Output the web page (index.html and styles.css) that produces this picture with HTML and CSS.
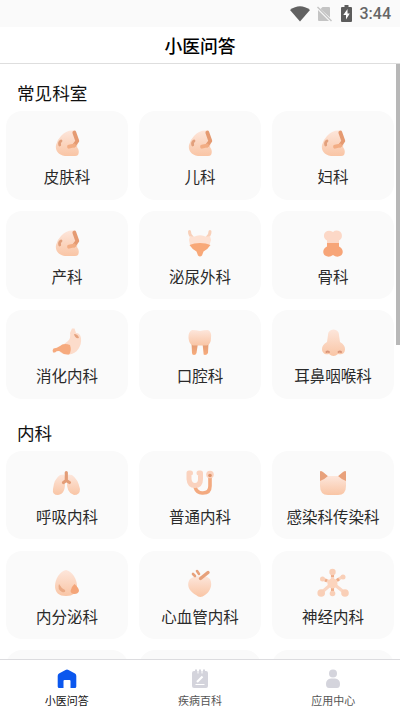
FILE: index.html
```
<!DOCTYPE html>
<html lang="zh-CN">
<head>
<meta charset="utf-8">
<title>小医问答</title>
<link rel="stylesheet" href="styles.css">
</head>
<body>
<svg class="defs" aria-hidden="true">
  <defs>
    <linearGradient id="pale" x1="0" y1="0" x2="0" y2="1"><stop offset="0" stop-color="#fde6db"/><stop offset="1" stop-color="#f9c5a5"/></linearGradient>
    <linearGradient id="warm" x1="0" y1="0" x2="0" y2="1"><stop offset="0" stop-color="#e09b76"/><stop offset="1" stop-color="#f8ac7c"/></linearGradient>
    <symbol id="skin" viewBox="0 0 30 30">
      <path fill="url(#pale)" d="M9 8C12 4 17 2 22 2.500L26 12L25 19Q28 23 26 27Q25 28 23 28H13C6 27 3 22 4 17Q5 12 9 8Z"/>
      <path fill="none" stroke="#e59a71" stroke-width="3.8" stroke-linecap="round" stroke-linejoin="round" d="M22.300 4.500L25.300 13L22 17.500"/>
      <path fill="none" stroke="#f2ad84" stroke-width="3.800" stroke-linecap="round" d="M22 17.500L17 18.700"/>
      <path fill="none" stroke="#e2a07c" stroke-width="2.800" stroke-linecap="round" d="M9 13Q7 14 7.700 17"/>
    </symbol>
    <symbol id="uterus" viewBox="0 0 30 30">
      <path fill="none" stroke="#f8d0b9" stroke-width="3" stroke-linecap="round" d="M4.500 3.500Q4.500 7 7 9M25 3.500Q25 7 22.500 9"/>
      <path fill="#fde0d1" d="M5 8Q9 9 11 8Q15 6.500 19 8Q21 9 25 8L26 12Q25 17 23 19H7Q4 16 4 12Z"/>
      <path fill="#f8a878" d="M4.500 17Q9 15 15 15T25.500 17Q23 21 18.500 23.500L17 27.500Q15 29.500 13 27.500L11.500 23.500Q7 21 4.500 17Z"/>
    </symbol>
    <symbol id="bone" viewBox="0 0 30 30">
      <path fill="#fcd8c7" d="M9 15.500V12.500C5.500 11 5 6 7.500 4S12.500 2.500 15 4Q18 1.500 22 3.500C25 6 24.500 11 21 12.500V15.500Z"/>
      <path fill="#f7a578" d="M9 15H21V18.500C25 20 26 25 23 27.500Q19 30 15 27Q11 30 7 27.500C4 25 5 20 9 18.500Z"/>
    </symbol>
    <symbol id="stomach" viewBox="0 0 30 30">
      <path fill="#fcdccb" d="M20 1.500H22.500L24 6Q28 6 29 11C30 19 25 27 17 27.500Q11 28 8 25L9 18Q13 17 16 14Q19 11 18 6Z"/>
      <path fill="#f6aa7e" d="M1.500 21.500Q5 21 8 19Q12 15.500 18 18Q20 24 17 27.500Q12 28 9 25Q6 23 3 25.500H1Q0 23 1.500 21.500Z"/>
      <path fill="#e5a37f" d="M22 7Q26 7 27 11Q23 12 22 7Z"/>
    </symbol>
    <symbol id="tooth" viewBox="0 0 30 30">
      <path fill="url(#warm)" d="M6.500 16H13L11.500 26Q11 28 9 28T7 26ZM17.500 16H23.500L23 26Q22 28 20 28T18.500 26Z"/>
      <path fill="url(#pale)" d="M7 3Q11 3 15 4Q19 3 23 3Q27 5 26 11Q26 17 22 18.500H8Q4 17 3.500 11Q3 5 7 3Z"/>
    </symbol>
    <symbol id="nose" viewBox="0 0 30 30">
      <path fill="url(#pale)" d="M15.500 2.500Q21 3 21 8L22 15Q27 18 27 22C27 27 23 28 20 27Q15.500 31 11 27C7 28 4 26 4 22Q4 18 9 15L10 8Q10 3 15.500 2.500Z"/>
      <path fill="none" stroke="#d99579" stroke-width="2" stroke-linecap="round" d="M8.500 25Q9.500 24 11 25M20.500 25Q22 24 23 25"/>
    </symbol>
    <symbol id="lungs" viewBox="0 0 30 30">
      <path fill="url(#pale)" d="M11.500 6.500Q13.500 7 13 12Q14 26 6 27Q0 27 1 21Q2 11 8 7ZM16.500 6.500Q14.500 7 15 12Q14 25 22 27Q28 27 28 21Q26 11 20 7Z"/>
      <path fill="none" stroke="#e39c76" stroke-width="3.200" stroke-linecap="round" stroke-linejoin="round" d="M14.300 4.500V12.500L11.500 14.500M14.300 12.500L17.500 14.500"/>
    </symbol>
    <symbol id="stethoscope" viewBox="0 0 30 30">
      <path fill="none" stroke="#f3aa80" stroke-width="3.600" d="M10 19Q12 25.500 18 25Q25 25 25 18V7"/>
      <path fill="none" stroke="#fad2be" stroke-width="5" stroke-linecap="round" stroke-linejoin="round" d="M5.500 5H4V11Q4.500 17.500 10 17.500T15.500 11V5H14"/>
      <circle cx="25" cy="6.500" r="3.800" fill="#fad2be"/>
      <circle cx="25" cy="7.500" r="1.800" fill="#df946b"/>
    </symbol>
    <symbol id="cat" viewBox="0 0 30 30">
      <path fill="#e8a17b" d="M2 4Q2 2 5 4L11 9L2 15ZM28 4Q28 2 25 4L19 9L28 15Z"/>
      <path fill="url(#pale)" d="M2 13Q7 11 10 8H20Q23 11 28 13V18Q28 27 20 27H10Q2 27 2 18Z"/>
    </symbol>
    <symbol id="gland" viewBox="0 0 30 30">
      <path fill="url(#pale)" d="M14 2C20 3 25 11 25 18Q25 28 14 28T3 18C3 11 8 3 14 2Z"/>
      <path fill="#eaaa85" d="M7 16Q9 20 13 22Q14 25 10 24Q5 21 7 16Z"/>
      <path fill="#f4a579" d="M22.500 16Q27 20 27 23Q26 26 22.500 26T18.500 23Q19 19 22.500 16Z"/>
    </symbol>
    <symbol id="heart" viewBox="0 0 30 30">
      <path fill="url(#pale)" d="M5 11Q9 7.500 15 8.500Q21 7 25 11C28 17 25 24 20 27Q15 31 11 27C4 23 1 17 5 11Z"/>
      <path fill="none" stroke="#e7a17b" stroke-width="3.400" stroke-linecap="round" stroke-linejoin="round" d="M23 4.500L18 8.500L15.500 10.500"/>
      <path fill="none" stroke="#e7a17b" stroke-width="2.600" stroke-linecap="round" d="M12 3L14 6M8 6L10 8"/>
    </symbol>
    <symbol id="nerve" viewBox="0 0 32 30">
      <path fill="none" stroke="#fad5c1" stroke-width="3.200" d="M15.500 15V3M15.500 15L6 11M15.500 15L25 9M15.500 15L4 25M15.500 15L28 25M15.500 15V25"/>
      <path fill="none" stroke="#efad89" stroke-width="3" d="M15.500 6V9M8 12L10 13M22 11L20 12.500M15.500 20V23"/>
      <circle cx="15.500" cy="15.500" r="5" fill="#fcd4bd"/>
      <g fill="#f9cfb7"><circle cx="15.500" cy="4" r="3.200"/><circle cx="5.500" cy="11" r="2.500"/><circle cx="26" cy="9" r="2.500"/><circle cx="4.200" cy="25" r="3.800"/><circle cx="28" cy="25" r="3.800"/><circle cx="15.500" cy="25.500" r="2.800"/></g>
    </symbol>
  </defs>
</svg>
<div class="app">
  <div class="status">
    <svg class="wifi" viewBox="0 0 20 16"><path fill="#616161" d="M0 4Q10-3.500 20 4L10 15.500Z"/></svg>
    <svg class="sim" viewBox="0 0 15 16"><path fill="#c4c4c4" d="M5.500 1H12Q13 1 13 2V11.500L3.500 3ZM1 4L12 15H2Q1 15 1 14Z"/><path stroke="#c4c4c4" stroke-width="1.500" d="M.5 1L14.500 15"/></svg>
    <svg class="battery" viewBox="0 0 11 17"><path fill="#5c5c5c" d="M3.500 0H7.500V2H10Q11 2 11 3V16Q11 17 10 17H1Q0 17 0 16V3Q0 2 1 2H3.500Z"/><path fill="#fff" d="M6.500 4L2.300 10H5V14.500L8.800 8.500H6.500Z"/></svg>
    <span>3:44</span>
  </div>
  <header class="header">小医问答</header>
  <main class="content">
    <div class="scrollbar"></div>
    <h2 class="section-title">常见科室</h2>
    <div class="grid">
      <div class="card"><svg><use href="#skin"/></svg><span>皮肤科</span></div>
      <div class="card"><svg><use href="#skin"/></svg><span>儿科</span></div>
      <div class="card"><svg><use href="#skin"/></svg><span>妇科</span></div>
      <div class="card"><svg><use href="#skin"/></svg><span>产科</span></div>
      <div class="card"><svg><use href="#uterus"/></svg><span>泌尿外科</span></div>
      <div class="card"><svg><use href="#bone"/></svg><span>骨科</span></div>
      <div class="card"><svg><use href="#stomach"/></svg><span>消化内科</span></div>
      <div class="card"><svg><use href="#tooth"/></svg><span>口腔科</span></div>
      <div class="card"><svg><use href="#nose"/></svg><span>耳鼻咽喉科</span></div>
    </div>
    <h2 class="section-title second">内科</h2>
    <div class="grid">
      <div class="card"><svg><use href="#lungs"/></svg><span>呼吸内科</span></div>
      <div class="card"><svg><use href="#stethoscope"/></svg><span>普通内科</span></div>
      <div class="card"><svg><use href="#cat"/></svg><span>感染科传染科</span></div>
      <div class="card"><svg><use href="#gland"/></svg><span>内分泌科</span></div>
      <div class="card"><svg><use href="#heart"/></svg><span>心血管内科</span></div>
      <div class="card"><svg class="wide"><use href="#nerve"/></svg><span>神经内科</span></div>
      <div class="card"></div>
      <div class="card"></div>
      <div class="card"></div>
    </div>
  </main>
  <nav class="tabs">
    <div class="tab active">
      <svg viewBox="0 0 20 20"><path fill="#0b57ee" d="M8.500 1Q10 0 11.500 1L18 4.500Q19.300 5.300 19.300 7V17.500Q19.300 19 17.800 19H13.500V12Q13.500 11 12.500 11H7.500Q6.500 11 6.500 12V19H2.200Q.7 19 .7 17.500V7Q.7 5.300 2 4.500Z"/></svg>
      <span>小医问答</span>
    </div>
    <div class="tab">
      <svg viewBox="0 0 20 20"><path fill="#d4d4dc" d="M4 2H5V.5H7V2H9V.5H11V2H13V.5H15V2H16Q18 2 18 4V17Q18 19 16 19H4Q2 19 2 17V4Q2 2 4 2Z"/><path fill="none" stroke="#fff" stroke-width="1" d="M5.500 15.500H14.500M8 2V4.500M12 2V4.500"/><path stroke="#fff" stroke-width="2.200" d="M12.500 7.500L7 13"/></svg>
      <span>疾病百科</span>
    </div>
    <div class="tab">
      <svg viewBox="0 0 20 20"><circle cx="10" cy="4.500" r="4" fill="#d4d4dc"/><path fill="#d4d4dc" d="M8 9.500H12Q17 10 17 15Q17 19 14 19H6Q3 19 3 15Q3 10 8 9.500Z"/></svg>
      <span>应用中心</span>
    </div>
  </nav>
</div>
</body>
</html>
```
FILE: styles.css
```
* {
  box-sizing: border-box;
}

body {
  margin: 0;
  background: #fff;
  font-family: "Noto Sans CJK SC", sans-serif;
  color: #2a2a2a;
}

.defs {
  position: absolute;
  width: 0;
  height: 0;
}

.app {
  display: flex;
  flex-direction: column;
  width: 400px;
  height: 710px;
  overflow: hidden;
}

.status {
  display: flex;
  flex: none;
  align-items: center;
  justify-content: flex-end;
  height: 27px;
  padding-right: 9px;
  background: #fafafa;
  color: #666;
  font: 500 16px/27px Roboto, sans-serif;
}

.wifi {
  width: 20px;
  height: 16px;
  margin-right: 7px;
}

.sim {
  width: 15px;
  height: 16px;
  margin-right: 9px;
}

.battery {
  width: 11px;
  height: 17px;
  margin-right: 8px;
}

.header {
  flex: none;
  height: 37px;
  border-bottom: 1px solid #dedede;
  color: #000;
  font-size: 17.8px;
  font-weight: 500;
  line-height: 36px;
  text-align: center;
}

.content {
  position: relative;
  flex: 1;
  min-height: 0;
  padding: 11px 6px 0;
  overflow: hidden;
}

.scrollbar {
  position: absolute;
  top: 0;
  right: 0;
  width: 4px;
  height: 281px;
  background: #b8b8b8;
}

.section-title {
  height: 36px;
  margin: 0;
  padding-left: 11px;
  color: #111;
  font-size: 17.6px;
  font-weight: 400;
  line-height: 35px;
}

.second {
  margin-top: 16px;
}

.grid {
  display: grid;
  grid-template-columns: repeat(3, 122px);
  grid-auto-rows: 88.5px;
  justify-content: space-between;
  row-gap: 11.2px;
}

.card {
  display: flex;
  flex-direction: column;
  align-items: center;
  padding-top: 17px;
  border-radius: 16px;
  background: #fafafa;
  font-size: 15.5px;
  line-height: 22px;
  white-space: nowrap;
}

.card svg {
  width: 30px;
  height: 30px;
  margin-bottom: 7px;
}

.card .wide {
  width: 32px;
}

.tabs {
  display: flex;
  flex: none;
  height: 51px;
  border-top: 1px solid #dcdcdf;
  background: #fff;
}

.tab {
  display: flex;
  flex: 1;
  flex-direction: column;
  align-items: center;
  padding-top: 9px;
  color: #555;
  font-size: 11px;
  line-height: 16px;
}

.tab svg {
  width: 20px;
  height: 20px;
  margin-bottom: 3px;
}

.active {
  color: #111;
}
```
